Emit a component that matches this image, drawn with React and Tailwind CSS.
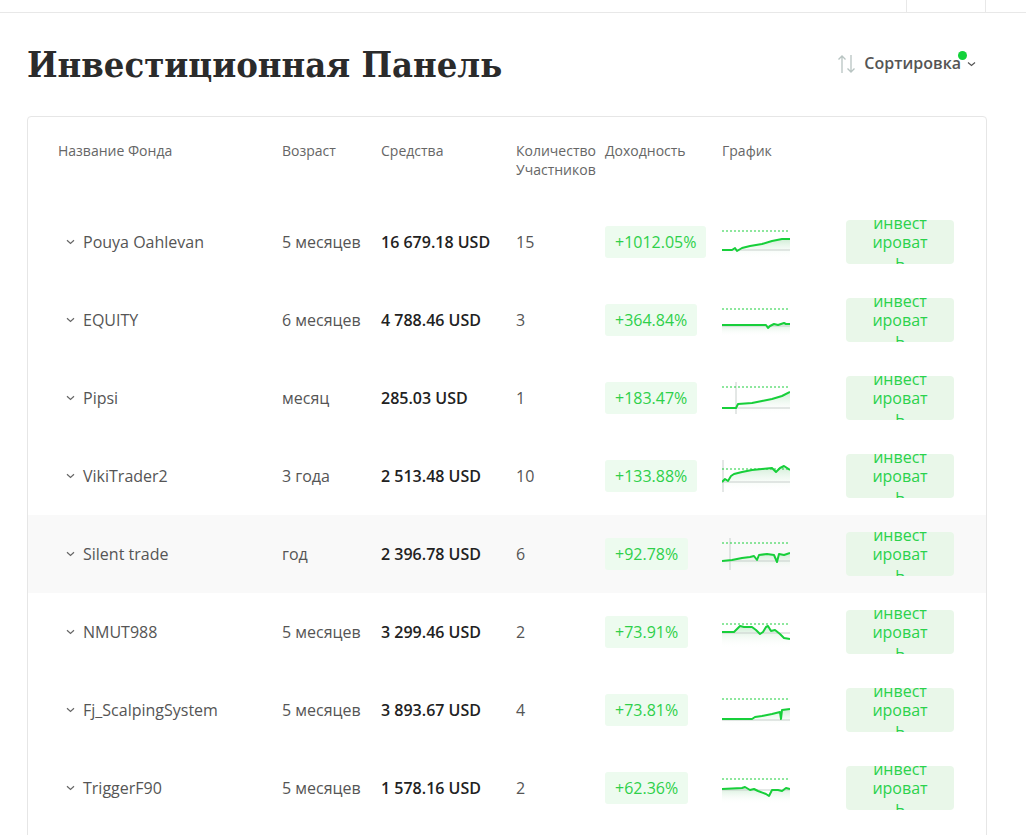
import React from 'react';

const funds = [
  { name: 'Pouya Oahlevan', age: '5 месяцев', funds: '16 679.18 USD', count: '15', yld: '+1012.05%', dot: 5, base: 24,
    pts: [[0,24],[10,24],[13,22],[15,25],[20,22],[28,20],[40,18],[50,15],[60,13],[68,13]] },
  { name: 'EQUITY', age: '6 месяцев', funds: '4 788.46 USD', count: '3', yld: '+364.84%', dot: 5, base: 22,
    pts: [[0,21],[40,21],[44,21],[46,24],[48,22],[52,20],[56,21],[62,19],[64,20],[68,20]] },
  { name: 'Pipsi', age: 'месяц', funds: '285.03 USD', count: '1', yld: '+183.47%', dot: 5, base: 26, vline: 14,
    pts: [[0,26],[14,26],[16,22],[30,21],[40,19],[50,17],[60,14],[68,10]] },
  { name: 'VikiTrader2', age: '3 года', funds: '2 513.48 USD', count: '10', yld: '+133.88%', dot: 9, base: 22, vline: 1,
    pts: [[0,22],[3,19],[6,21],[9,16],[12,14],[20,12],[30,10],[40,9],[50,8],[54,12],[58,8],[62,6],[68,10]] },
  { name: 'Silent trade', age: 'год', funds: '2 396.78 USD', count: '6', yld: '+92.78%', dot: 5, base: 23, vline: 8, hover: true,
    pts: [[0,23],[10,22],[20,20],[28,19],[32,18],[35,22],[37,17],[45,16],[52,17],[55,24],[57,16],[62,17],[68,15]] },
  { name: 'NMUT988', age: '5 месяцев', funds: '3 299.46 USD', count: '2', yld: '+73.91%', dot: 8, base: 17,
    pts: [[0,16],[12,16],[15,13],[18,10],[22,11],[30,11],[34,14],[38,18],[41,16],[44,11],[46,10],[49,15],[53,14],[58,18],[62,22],[68,23]] },
  { name: 'Fj_ScalpingSystem', age: '5 месяцев', funds: '3 893.67 USD', count: '4', yld: '+73.81%', dot: 5, base: 26,
    pts: [[0,25],[30,25],[33,23],[40,22],[50,20],[58,18],[59,25],[60,16],[68,15]] },
  { name: 'TriggerF90', age: '5 месяцев', funds: '1 578.16 USD', count: '2', yld: '+62.36%', dot: 7, base: 18,
    pts: [[0,17],[20,16],[23,15],[28,18],[32,17],[36,19],[44,22],[47,24],[50,18],[56,18],[60,19],[64,16],[68,17]] },
];

function Spark({ f, i }) {
  const line = f.pts.map((p) => p.join(',')).join(' ');
  const area = `0,32 ${line} 68,32`;
  return (
    <svg width="68" height="32" viewBox="0 0 68 32" className="block">
      <defs>
        <linearGradient id={`g${i}`} x1="0" y1="0" x2="0" y2="1">
          <stop offset="0" stopColor="#b9e4c2" stopOpacity="0.7" />
          <stop offset="1" stopColor="#ffffff" stopOpacity="0" />
        </linearGradient>
      </defs>
      <path d={`M${area}Z`} fill={`url(#g${i})`} />
      <line x1="0" x2="68" y1={f.base} y2={f.base} stroke="#c8cfcc" strokeWidth="1" />
      {f.vline !== undefined && (
        <line x1={f.vline} x2={f.vline} y1="0" y2="32" stroke="#c8cfcc" strokeWidth="1" />
      )}
      <line x1="0" x2="68" y1={f.dot} y2={f.dot} stroke="#1ccf3c" strokeWidth="1" strokeDasharray="2 2" />
      <polyline points={line} fill="none" stroke="#17cf3a" strokeWidth="2" strokeLinejoin="round" />
    </svg>
  );
}

const cols = 'grid grid-cols-[30px_224px_99px_135px_89px_117px_124px_108px_32px]';

export default function App() {
  return (
    <div className="min-h-screen bg-white font-['Open_Sans',sans-serif] text-[#555]">
      <div className="flex h-[13px] border-b border-[#e8e8e8]">
        <div className="flex-1" />
        <div className="w-[80px] border-l border-r border-[#e8e8e8]" />
        <div className="w-[40px]" />
      </div>

      <div className="pl-[27px] pr-[39px]">
        <div className="flex items-center justify-between pt-[26px] pb-[27px]">
          <h1 className="font-['DejaVu_Serif_Condensed','DejaVu_Serif',serif] font-bold text-[36px] leading-[50px] text-[#2b2b2b]">
            Инвестиционная Панель
          </h1>
          <button className="flex items-center pr-[11px] text-[16px] font-semibold text-[#555] -mt-[3px]">
            <svg width="19" height="20" viewBox="0 0 19 20" className="mr-[8px] mt-[2px]">
              <path d="M5 19 V2 M1.5 5.5 L5 2 L8.5 5.5" fill="none" stroke="#b8c4c2" strokeWidth="1.3" />
              <path d="M14 1 V18 M10.5 14.5 L14 18 L17.5 14.5" fill="none" stroke="#b8c4c2" strokeWidth="1.3" />
            </svg>
            <span className="relative">
              Сортировка
              <span className="absolute -right-[6px] top-0 w-[9px] h-[9px] rounded-full bg-[#13d23a]" />
            </span>
            <svg width="9" height="6" viewBox="0 0 9 6" className="ml-[6px] mt-[2px]">
              <path d="M1 1.5 L4.5 4.5 L8 1.5" fill="none" stroke="#555" strokeWidth="1.2" />
            </svg>
          </button>
        </div>

        <div className="border border-[#e6e6e6] rounded-[4px] min-h-[760px]">
          <div className={`${cols} pt-[24px] h-[86px] text-[14px] leading-[19px] text-[#666]`}>
            <div />
            <div>Название Фонда</div>
            <div>Возраст</div>
            <div>Средства</div>
            <div>Количество Участников</div>
            <div>Доходность</div>
            <div>График</div>
            <div />
            <div />
          </div>
          {funds.map((f, i) => (
            <div key={f.name} className={`${cols} h-[78px] items-center text-[16px] ${f.hover ? 'bg-[#f9f9f9]' : ''}`}>
              <div />
              <div className="flex items-center">
                <svg width="9" height="6" viewBox="0 0 9 6" className="ml-[8px] mr-[8px]">
                  <path d="M1 1.2 L4.5 4.5 L8 1.2" fill="none" stroke="#666" strokeWidth="1.2" />
                </svg>
                <span>{f.name}</span>
              </div>
              <div>{f.age}</div>
              <div className="font-semibold text-[#222]">{f.funds}</div>
              <div>{f.count}</div>
              <div>
                <span className="inline-flex items-center h-[32px] px-[10px] rounded-[3px] bg-[#edfbef] text-[#2ed04a]">
                  {f.yld}
                </span>
              </div>
              <div>
                <Spark f={f} i={i} />
              </div>
              <div>
                <button className="w-[108px] h-[44px] overflow-hidden rounded-[4px] bg-[#e9f7e9] text-[#2bd24c] text-[16px] leading-[19px] flex items-center justify-center">
                  <span className="block w-[60px] break-all text-center">инвестировать</span>
                </button>
              </div>
              <div />
            </div>
          ))}
        </div>
      </div>
    </div>
  );
}
